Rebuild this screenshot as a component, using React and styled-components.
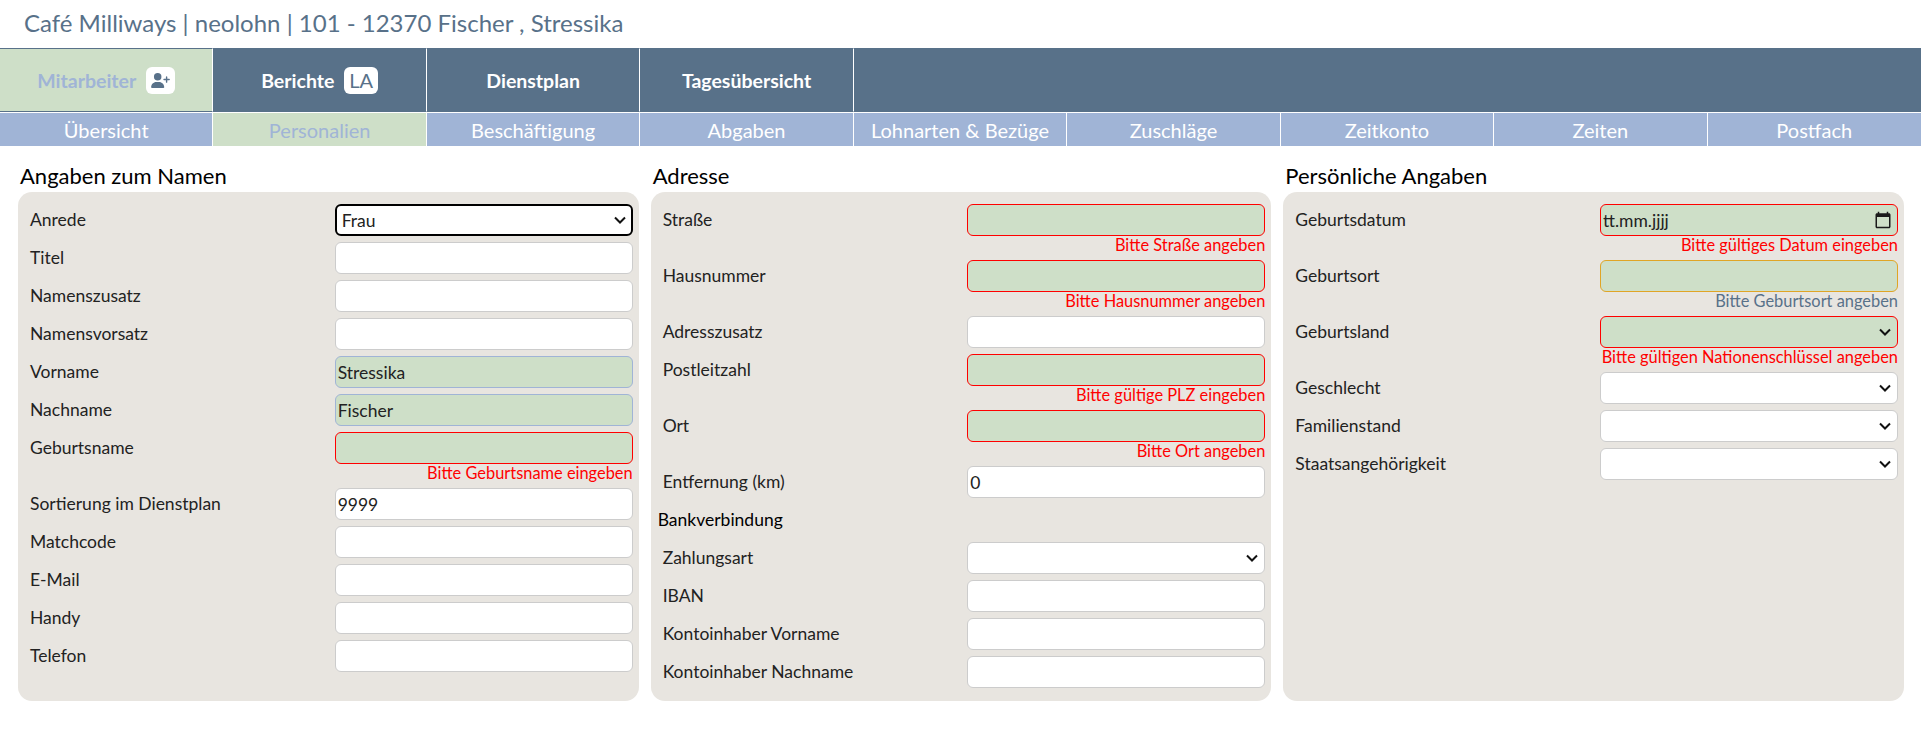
import React from "react";
import styled, { createGlobalStyle } from "styled-components";

const Global = createGlobalStyle`
  html, body { margin: 0; padding: 0; background: #fff; }
  body { font-family: "Lato", "Noto Sans", sans-serif; font-weight: 400; font-size: 17.5px; color: #222; }
  * { box-sizing: border-box; }
`;

const Page = styled.div`
  width: 1921px;
  height: 751px;
  overflow: hidden;
`;

const Title = styled.h1`
  margin: 0;
  height: 48px;
  padding: 6px 0 0 24px;
  font-size: 24px;
  line-height: 34px;
  font-weight: 400;
  color: #587189;
`;

const MainNav = styled.nav`
  display: grid;
  grid-template-columns: repeat(9, 1fr);
  height: 65px;
  background: #587189;
  border-bottom: 1px solid #fff;
`;

const MainTab = styled.div`
  display: flex;
  align-items: center;
  justify-content: center;
  gap: 10px;
  font-size: 19.5px;
  font-weight: 700;
  color: ${(p) => (p.$active ? "#a0b4d6" : "#fff")};
  background: ${(p) => (p.$active ? "#cedfc8" : "#587189")};
  border-top: 1px solid #587189;
  border-bottom: 1px solid #587189;
  border-right: 1px solid #fff;
`;

const Badge = styled.span`
  display: flex;
  align-items: center;
  justify-content: center;
  height: 27px;
  min-width: 29px;
  padding: 0 5px;
  background: #fff;
  border-radius: 6px;
  color: #587189;
  font-size: 20px;
  font-weight: 400;
`;

const SubNav = styled.nav`
  display: grid;
  grid-template-columns: repeat(9, 1fr);
  height: 33px;
  background: #a0b4d6;
`;

const SubTab = styled.div`
  display: flex;
  align-items: center;
  justify-content: center;
  font-size: 20px;
  color: ${(p) => (p.$active ? "#a0b4d6" : "#fff")};
  background: ${(p) => (p.$active ? "#cedfc8" : "#a0b4d6")};
  border-right: 1px solid #fff;
  &:last-child { border-right: 0; }
`;

const Columns = styled.main`
  display: grid;
  grid-template-columns: repeat(3, 1fr);
  gap: 12px;
  padding: 13px 17px 0 18px;
`;

const Column = styled.section`
  display: flex;
  flex-direction: column;
`;

const Heading = styled.h2`
  margin: 0 0 0 2px;
  height: 33px;
  font-size: 22px;
  line-height: 33px;
  font-weight: 400;
  color: #000;
`;

const Panel = styled.div`
  flex: 1;
  padding: 12px 6px 7px 9px;
  background: #e8e5e0;
  border-radius: 14px;
`;

const Row = styled.div`
  display: grid;
  grid-template-columns: 1fr 298px;
  align-items: start;
  margin-bottom: 6px;
`;

const Label = styled.label`
  padding-left: 3px;
  line-height: 32px;
`;

const Field = styled.div`
  position: relative;
`;

const fieldStyle = (p) => `
  display: block;
  width: 100%;
  height: 32px;
  padding: 0 2px;
  font: 400 17.5px "Lato", sans-serif;
  color: #222;
  border-radius: 6px;
  outline: none;
  background-color: ${p.$state && p.$state !== "focus" ? "#cedfc8" : "#fff"};
  border: ${p.$state === "focus" ? "2px solid #000" : "1px solid " + (p.$state === "error" ? "#ff0000" : p.$state === "warn" ? "#e0a526" : p.$state === "ok" ? "#a0b4d6" : "#ccc")};
`;

const Input = styled.input`
  ${fieldStyle}
  &::placeholder { color: #222; opacity: 1; }
`;

const Select = styled.select`
  ${fieldStyle}
  appearance: none;
  padding-left: 5px;
`;

const Hint = styled.div`
  height: 18px;
  line-height: 18px;
  text-align: right;
  font-size: 16.4px;
  color: ${(p) => (p.$warn ? "#587189" : "#ff0000")};
`;

const CalendarIcon = styled.svg`
  position: absolute;
  top: 7px;
  right: 6px;
  width: 18px;
  height: 18px;
`;

const Chevron = styled.svg`
  position: absolute;
  top: 12px;
  right: 7px;
  width: 12px;
  height: 8px;
  pointer-events: none;
`;

const BankTitle = styled.div`
  height: 32px;
  margin: 0 0 6px -2px;
  line-height: 32px;
  color: #000;
`;

const UserPlus = () => (
  <svg width="19" height="15" viewBox="0 0 640 512" fill="#587189">
    <path d="M224 256a128 128 0 1 0 0-256 128 128 0 1 0 0 256zm-45.700 48C79.800 304 0 383.800 0 482.300 0 498.700 13.300 512 29.700 512h388.600c16.400 0 29.700-13.300 29.700-29.700 0-98.500-79.800-178.300-178.300-178.300h-91.400zM504 312v-64h-64c-13.300 0-24-10.700-24-24s10.700-24 24-24h64v-64c0-13.300 10.700-24 24-24s24 10.700 24 24v64h64c13.300 0 24 10.700 24 24s-10.700 24-24 24h-64v64c0 13.300-10.700 24-24 24s-24-10.700-24-24z" />
  </svg>
);

const FormRow = ({ label, as, value, state, hint, warn, placeholder, children }) => (
  <Row>
    <Label>{label}</Label>
    <Field>
      {as === "select" ? (
        <>
          <Select $state={state} defaultValue={value}>
            <option value={value}>{value}</option>
          </Select>
          <Chevron viewBox="0 0 12 8" fill="none" stroke="#111" strokeWidth="2">
            <path d="M1 1.500l5 5 5-5" />
          </Chevron>
        </>
      ) : (
        <Input $state={state} defaultValue={value} placeholder={placeholder} />
      )}
      {children}
      {hint && <Hint $warn={warn}>{hint}</Hint>}
    </Field>
  </Row>
);

const subTabs = ["Übersicht", "Personalien", "Beschäftigung", "Abgaben", "Lohnarten & Bezüge", "Zuschläge", "Zeitkonto", "Zeiten", "Postfach"];

export default function App() {
  return (
    <Page>
      <Global />
      <Title>Café Milliways | neolohn | 101 - 12370 Fischer , Stressika</Title>
      <MainNav>
        <MainTab $active>Mitarbeiter <Badge><UserPlus /></Badge></MainTab>
        <MainTab>Berichte <Badge>LA</Badge></MainTab>
        <MainTab>Dienstplan</MainTab>
        <MainTab>Tagesübersicht</MainTab>
      </MainNav>
      <SubNav>
        {subTabs.map((t) => (
          <SubTab key={t} $active={t === "Personalien"}>{t}</SubTab>
        ))}
      </SubNav>
      <Columns>
        <Column>
          <Heading>Angaben zum Namen</Heading>
          <Panel>
            <FormRow label="Anrede" as="select" value="Frau" state="focus" />
            <FormRow label="Titel" />
            <FormRow label="Namenszusatz" />
            <FormRow label="Namensvorsatz" />
            <FormRow label="Vorname" value="Stressika" state="ok" />
            <FormRow label="Nachname" value="Fischer" state="ok" />
            <FormRow label="Geburtsname" state="error" hint="Bitte Geburtsname eingeben" />
            <FormRow label="Sortierung im Dienstplan" value="9999" />
            <FormRow label="Matchcode" />
            <FormRow label="E-Mail" />
            <FormRow label="Handy" />
            <FormRow label="Telefon" />
          </Panel>
        </Column>
        <Column>
          <Heading>Adresse</Heading>
          <Panel>
            <FormRow label="Straße" state="error" hint="Bitte Straße angeben" />
            <FormRow label="Hausnummer" state="error" hint="Bitte Hausnummer angeben" />
            <FormRow label="Adresszusatz" />
            <FormRow label="Postleitzahl" state="error" hint="Bitte gültige PLZ eingeben" />
            <FormRow label="Ort" state="error" hint="Bitte Ort angeben" />
            <FormRow label="Entfernung (km)" value="0" />
            <BankTitle>Bankverbindung</BankTitle>
            <FormRow label="Zahlungsart" as="select" />
            <FormRow label="IBAN" />
            <FormRow label="Kontoinhaber Vorname" />
            <FormRow label="Kontoinhaber Nachname" />
          </Panel>
        </Column>
        <Column>
          <Heading>Persönliche Angaben</Heading>
          <Panel>
            <FormRow label="Geburtsdatum" state="error" placeholder="tt.mm.jjjj" hint="Bitte gültiges Datum eingeben">
              <CalendarIcon viewBox="0 0 24 24" fill="#1a1a1a">
                <path d="M20 3h-1V1h-2v2H7V1H5v2H4c-1.100 0-2 .9-2 2v16c0 1.100.9 2 2 2h16c1.100 0 2-.9 2-2V5c0-1.100-.9-2-2-2zm0 18H4V8h16v13z" />
              </CalendarIcon>
            </FormRow>
            <FormRow label="Geburtsort" state="warn" warn hint="Bitte Geburtsort angeben" />
            <FormRow label="Geburtsland" as="select" state="error" hint="Bitte gültigen Nationenschlüssel angeben" />
            <FormRow label="Geschlecht" as="select" />
            <FormRow label="Familienstand" as="select" />
            <FormRow label="Staatsangehörigkeit" as="select" />
          </Panel>
        </Column>
      </Columns>
    </Page>
  );
}
